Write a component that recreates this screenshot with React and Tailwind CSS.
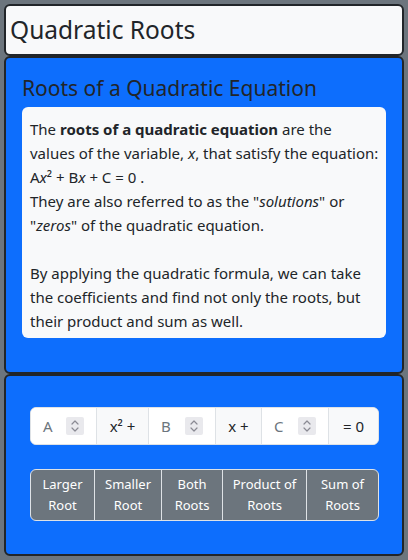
import React from 'react';

const Spinner = () => (
  <span className="flex h-[18px] w-[18px] flex-col items-center justify-center bg-[#e9e9ed] rounded-[2px]">
    <svg width="10" height="14" viewBox="0 0 10 14" fill="none" stroke="#8a8a93" strokeWidth="1.2" strokeLinecap="round" strokeLinejoin="round">
      <path d="M2 5 L5 2 L8 5" />
      <path d="M2 9 L5 12 L8 9" />
    </svg>
  </span>
);

const NumInput = ({ label, width }) => (
  <div className={`flex items-center justify-between bg-white pl-3 pr-3 ${width}`}>
    <span className="text-[#6c757d]">{label}</span>
    <Spinner />
  </div>
);

const Addon = ({ children, width }) => (
  <div className={`flex items-center justify-center bg-[#f8f9fa] border-x border-[#dee2e6] ${width}`}>
    {children}
  </div>
);

const buttons = [
  { top: 'Larger', bottom: 'Root', width: 'w-[63px]' },
  { top: 'Smaller', bottom: 'Root', width: 'w-[67px]' },
  { top: 'Both', bottom: 'Roots', width: 'w-[61px]' },
  { top: 'Product of', bottom: 'Roots', width: 'w-[84px]' },
  { top: 'Sum of', bottom: 'Roots', width: 'w-[72px]' },
];

const App = () => {
  return (
    <div className="h-screen flex flex-col bg-[#6c757d] p-1 text-[#212529]" style={{ fontFamily: '"Noto Sans", "Open Sans", sans-serif' }}>
      <div className="h-[52px] flex items-center rounded-md border-2 border-[#212529] bg-[#f8f9fa] px-1">
        <h1 className="text-[24.5px] leading-[1.2]">Quadratic Roots</h1>
      </div>

      <div className="rounded-md border-2 border-[#212529] bg-[#0d6efd] px-4 pt-4 pb-[34px]">
        <h3 className="text-[21px] leading-[1.2] mt-[2px] mb-[6px]">Roots of a Quadratic Equation</h3>
        <div className="rounded-md bg-[#f8f9fa] pl-2 pr-1 pt-[10px] pb-[5px] text-[15px] leading-[24px] whitespace-nowrap">
          <p>
            The <b>roots of a quadratic equation</b> are the
            <br />
            values of the variable, <i>x</i>, that satisfy the equation:
            <br />
            A<i>x</i>² + B<i>x</i> + C = 0 .
            <br />
            They are also referred to as the "<i>solutions</i>" or
            <br />
            "<i>zeros</i>" of the quadratic equation.
          </p>
          <br />
          <p>
            By applying the quadratic formula, we can take
            <br />
            the coefficients and find not only the roots, but
            <br />
            their product and sum as well.
          </p>
        </div>
      </div>

      <div className="flex-1 rounded-md border-2 border-[#212529] bg-[#0d6efd] pl-6 pr-[23px] pt-[31px]">
        <div className="flex h-[38px] overflow-hidden rounded-md border border-[#dee2e6] bg-white text-[15px]">
          <NumInput label="A" width="w-[65px]" />
          <Addon width="w-[53px]">x² +</Addon>
          <NumInput label="B" width="w-[66px]" />
          <Addon width="w-[47px]">x +</Addon>
          <NumInput label="C" width="w-[66px]" />
          <Addon width="flex-1 border-r-0">= 0</Addon>
        </div>

        <div className="mt-6 flex overflow-hidden rounded-md border border-[#dee2e6] bg-[#6c757d] text-[13px] leading-[21px] text-white">
          {buttons.map((btn, i) => (
            <button
              key={btn.top}
              className={`${btn.width} py-1 px-1 text-center whitespace-nowrap ${i > 0 ? 'border-l border-[#dee2e6]' : ''}`}
            >
              {btn.top}
              <br />
              {btn.bottom}
            </button>
          ))}
        </div>
      </div>
    </div>
  );
};

export default App;
